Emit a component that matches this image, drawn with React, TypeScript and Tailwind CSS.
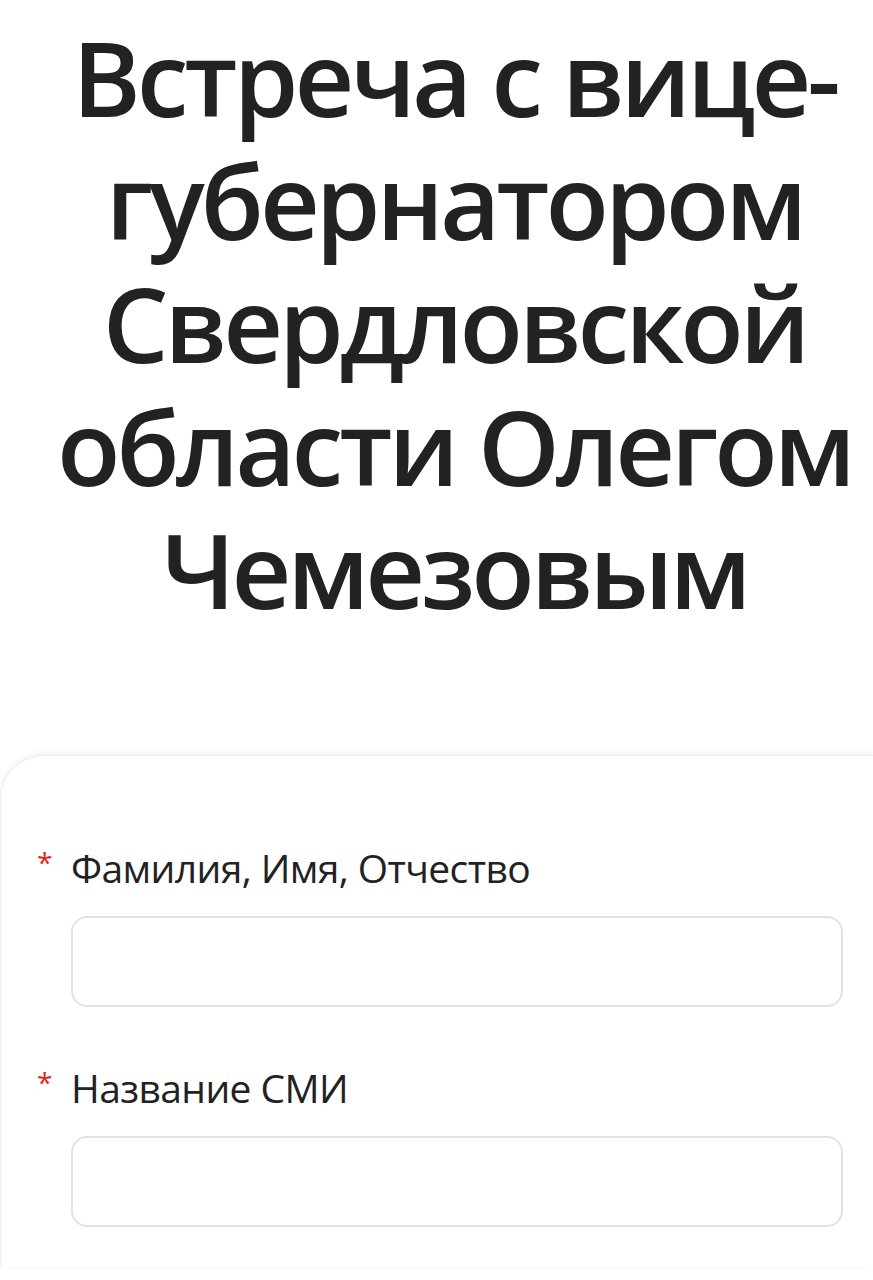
export default function App() {
  return (
    <div className="min-h-[1280px] bg-white overflow-hidden" style={{ fontFamily: '"Open Sans", "Noto Sans", sans-serif' }}>
      <h1 className="pt-[15px] pl-[44px] pr-[8px] text-center text-[104px] leading-[123px] font-semibold tracking-[-4px] text-[#222]">
        Встреча с вице-<br />губернатором<br />Свердловской<br />области Олегом<br />Чемезовым
      </h1>
      <div className="mt-[125px] rounded-tl-[44px] bg-white shadow-[0_-2px_6px_rgba(0,0,0,0.06)] border-t border-l border-[#eeeeee] pt-[90px] pl-[36px] pr-[30px] pb-10">
        <Field label="Фамилия, Имя, Отчество" />
        <div className="h-[59px]" />
        <Field label="Название СМИ" />
      </div>
    </div>
  );
}

function Field({ label }: { label: string }) {
  return (
    <div>
      <div className="flex items-start">
        <span className="w-[34px] text-[28px] leading-[32px] text-[#e0261b]">*</span>
        <span className="text-[39px] leading-[44px] font-medium text-[#222] tracking-[-0.6px]">{label}</span>
      </div>
      <div className="mt-[26px] ml-[34px] h-[91px] rounded-[16px] border-2 border-[#e3e3e3] bg-white" />
    </div>
  );
}
